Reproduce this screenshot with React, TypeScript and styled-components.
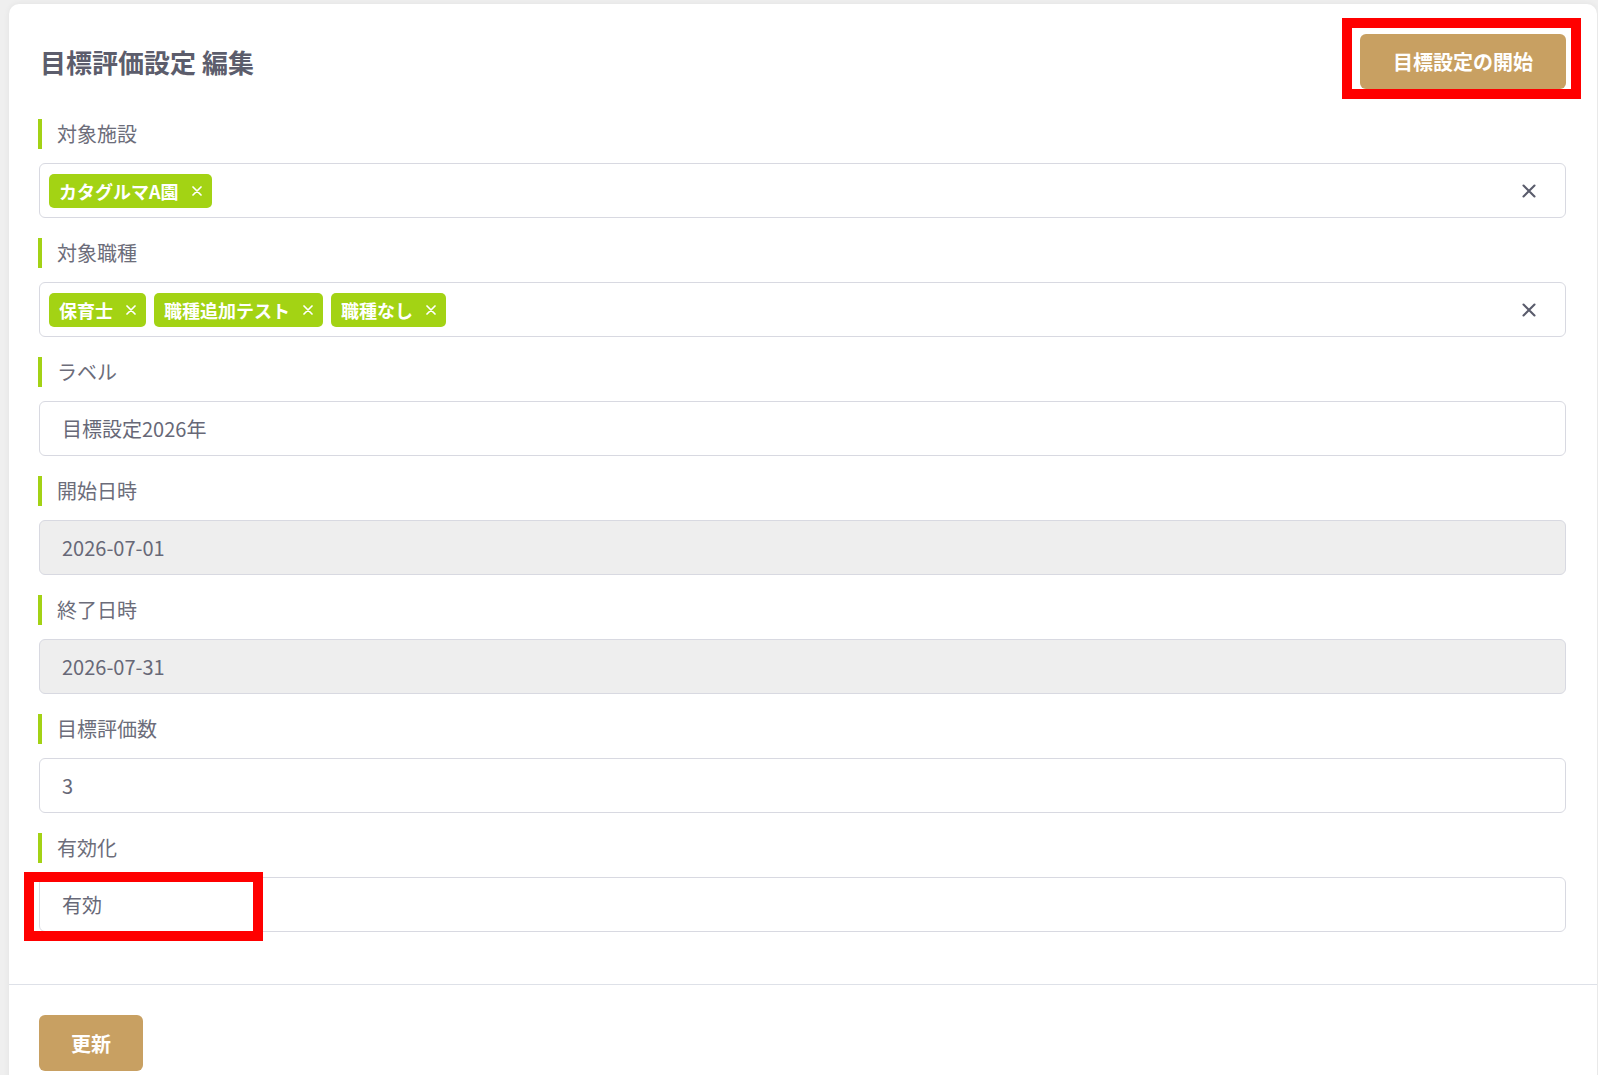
import React from "react";
import styled, { createGlobalStyle } from "styled-components";

const GlobalStyle = createGlobalStyle`
  html, body {
    margin: 0;
    padding: 0;
    background: #efefef;
  }
  body {
    font-family: "Noto Sans CJK JP", "Noto Sans", sans-serif;
    color: #666875;
  }
  * { box-sizing: border-box; }
`;

const Page = styled.div`
  position: relative;
  padding: 4px 1px 0 9px;
  min-height: 1075px;
`;

const Card = styled.div`
  background: #ffffff;
  border-radius: 10px;
  box-shadow: 0 0 6px rgba(0, 0, 0, 0.06);
  min-height: 1071px;
`;

const Body = styled.div`
  padding: 30px 31px 52px 30px;
`;

const Header = styled.div`
  display: flex;
  align-items: center;
  justify-content: space-between;
  height: 55px;
  margin-bottom: 30px;
`;

const Title = styled.h1`
  margin: 0 0 0 1px;
  font-size: 26px;
  font-weight: 700;
  color: #5c5d6c;
  letter-spacing: 0;
`;

const GoldButton = styled.button<{ $w: number; $h: number }>`
  width: ${(p) => p.$w}px;
  height: ${(p) => p.$h}px;
  background: #c8a062;
  color: #ffffff;
  border: none;
  border-radius: 6px;
  font-family: "Noto Sans CJK JP", "Noto Sans", sans-serif;
  font-size: 20px;
  font-weight: 700;
  display: flex;
  align-items: center;
  justify-content: center;
  padding: 0;
  cursor: pointer;
`;

const Field = styled.div`
  display: flex;
  flex-direction: column;
  margin-bottom: 20px;
  &:last-child { margin-bottom: 0; }
`;

const Label = styled.div`
  height: 30px;
  line-height: 30px;
  border-left: 4px solid #a3d215;
  padding-left: 15px;
  margin-left: -1px;
  margin-bottom: 14px;
  font-size: 20px;
  color: #6c6d7a;
`;

const InputBox = styled.div<{ $disabled?: boolean }>`
  height: 55px;
  border: 1px solid #d8d9e1;
  border-radius: 6px;
  background: ${(p) => (p.$disabled ? "#eeeeee" : "#ffffff")};
  display: flex;
  align-items: center;
  padding: 0 22px;
  font-size: 20px;
  color: #676877;
`;

const TagBox = styled.div`
  height: 55px;
  border: 1px solid #d8d9e1;
  border-radius: 6px;
  background: #ffffff;
  display: flex;
  align-items: center;
  padding: 0 29px 0 9px;
`;

const Tags = styled.div`
  display: flex;
  gap: 8px;
  flex: 1;
`;

const Tag = styled.span`
  display: inline-flex;
  align-items: center;
  gap: 13px;
  height: 34px;
  padding: 0 10px;
  background: #a3d314;
  color: #ffffff;
  border-radius: 5px;
  font-size: 18px;
  font-weight: 700;
`;

const ClearButton = styled.span`
  display: flex;
  align-items: center;
  justify-content: center;
  width: 14px;
  height: 14px;
`;

const Divider = styled.hr`
  margin: 0;
  border: none;
  border-top: 1px solid #dee1e8;
`;

const Footer = styled.div`
  padding: 30px 30px 30px;
`;

const Highlight = styled.div<{ $l: number; $t: number; $w: number; $h: number }>`
  position: absolute;
  left: ${(p) => p.$l}px;
  top: ${(p) => p.$t}px;
  width: ${(p) => p.$w}px;
  height: ${(p) => p.$h}px;
  border: 10px solid #ff0000;
  pointer-events: none;
`;

const TagX = () => (
  <svg width="10" height="10" viewBox="0 0 10 10">
    <path d="M1 1 L9 9 M9 1 L1 9" stroke="#ffffff" strokeWidth="1.7" strokeLinecap="round" />
  </svg>
);

const ClearX = () => (
  <svg width="14" height="14" viewBox="0 0 14 14">
    <path d="M1.5 1.5 L12.5 12.5 M12.5 1.5 L1.5 12.5" stroke="#5a5c6c" strokeWidth="2.1" strokeLinecap="round" />
  </svg>
);

const TagField = ({ label, tags }: { label: string; tags: string[] }) => (
  <Field>
    <Label>{label}</Label>
    <TagBox>
      <Tags>
        {tags.map((t) => (
          <Tag key={t}>
            {t}
            <TagX />
          </Tag>
        ))}
      </Tags>
      <ClearButton>
        <ClearX />
      </ClearButton>
    </TagBox>
  </Field>
);

const TextField = ({ label, value, disabled }: { label: string; value: string; disabled?: boolean }) => (
  <Field>
    <Label>{label}</Label>
    <InputBox $disabled={disabled}>{value}</InputBox>
  </Field>
);

export default function App() {
  return (
    <>
      <GlobalStyle />
      <Page>
        <Card>
          <Body>
            <Header>
              <Title>目標評価設定 編集</Title>
              <GoldButton $w={206} $h={55}>目標設定の開始</GoldButton>
            </Header>
            <TagField label="対象施設" tags={["カタグルマA園"]} />
            <TagField label="対象職種" tags={["保育士", "職種追加テスト", "職種なし"]} />
            <TextField label="ラベル" value="目標設定2026年" />
            <TextField label="開始日時" value="2026-07-01" disabled />
            <TextField label="終了日時" value="2026-07-31" disabled />
            <TextField label="目標評価数" value="3" />
            <TextField label="有効化" value="有効" />
          </Body>
          <Divider />
          <Footer>
            <GoldButton $w={104} $h={56}>更新</GoldButton>
          </Footer>
        </Card>
        <Highlight $l={1342} $t={18} $w={239} $h={81} />
        <Highlight $l={24} $t={872} $w={239} $h={69} />
      </Page>
    </>
  );
}
